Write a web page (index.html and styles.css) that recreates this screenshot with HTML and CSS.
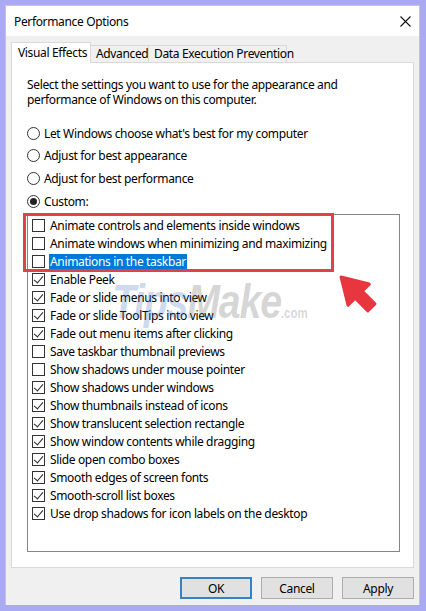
FILE: index.html
```html
<!DOCTYPE html>
<html lang="en">
<head>
    <meta charset="UTF-8">
    <meta name="viewport" content="width=device-width, initial-scale=1.0">
    <title>Performance Options</title>
    <link rel="stylesheet" href="styles.css">
</head>
<body>
    <div class="window">
        <div class="titlebar">
            <span class="title">Performance Options</span>
            <svg class="close" width="11" height="11" viewBox="0 0 11 11">
                <path d="M0.5 0.5 L10.5 10.5 M10.5 0.5 L0.5 10.5" stroke="#111" stroke-width="1.1" fill="none"/>
            </svg>
        </div>

        <div class="tabs">
            <div class="tab tab-visual active">Visual Effects</div>
            <div class="tab tab-advanced">Advanced</div>
            <div class="tab tab-dep">Data Execution Prevention</div>
        </div>

        <div class="panel">
            <p class="intro">Select the settings you want to use for the appearance and<br>performance of Windows on this computer.</p>

            <div class="radios">
                <div class="radio"><span class="dot"></span>Let Windows choose what's best for my computer</div>
                <div class="radio"><span class="dot"></span>Adjust for best appearance</div>
                <div class="radio"><span class="dot"></span>Adjust for best performance</div>
                <div class="radio checked"><span class="dot"></span>Custom:</div>
            </div>

            <div class="list">
                <div class="item"><span class="box"></span><span class="text">Animate controls and elements inside windows</span></div>
                <div class="item"><span class="box"></span><span class="text">Animate windows when minimizing and maximizing</span></div>
                <div class="item selected"><span class="box"></span><span class="text">Animations in the taskbar</span></div>
                <div class="item checked"><span class="box"></span><span class="text">Enable Peek</span></div>
                <div class="item checked"><span class="box"></span><span class="text">Fade or slide menus into view</span></div>
                <div class="item checked"><span class="box"></span><span class="text">Fade or slide ToolTips into view</span></div>
                <div class="item checked"><span class="box"></span><span class="text">Fade out menu items after clicking</span></div>
                <div class="item"><span class="box"></span><span class="text">Save taskbar thumbnail previews</span></div>
                <div class="item"><span class="box"></span><span class="text">Show shadows under mouse pointer</span></div>
                <div class="item checked"><span class="box"></span><span class="text">Show shadows under windows</span></div>
                <div class="item checked"><span class="box"></span><span class="text">Show thumbnails instead of icons</span></div>
                <div class="item checked"><span class="box"></span><span class="text">Show translucent selection rectangle</span></div>
                <div class="item checked"><span class="box"></span><span class="text">Show window contents while dragging</span></div>
                <div class="item checked"><span class="box"></span><span class="text">Slide open combo boxes</span></div>
                <div class="item checked"><span class="box"></span><span class="text">Smooth edges of screen fonts</span></div>
                <div class="item checked"><span class="box"></span><span class="text">Smooth-scroll list boxes</span></div>
                <div class="item checked"><span class="box"></span><span class="text">Use drop shadows for icon labels on the desktop</span></div>
            </div>
        </div>

        <div class="buttons">
            <button class="default">OK</button>
            <button>Cancel</button>
            <button>Apply</button>
        </div>

        <!-- annotation drawn over the list -->
        <div class="callout"></div>
        <svg class="pointer" width="50" height="50" viewBox="0 0 50 50">
            <g transform="translate(8 9) rotate(-45)">
                <polygon points="0,0 15,25 5,25 5,43 -5,43 -5,25 -15,25" fill="#e8363f" stroke="#e8363f" stroke-width="3" stroke-linejoin="round"/>
            </g>
        </svg>

        <div class="watermark"><span class="wm-tips">Tips</span><span class="wm-make">Make</span><span class="wm-com">.com</span></div>
    </div>
</body>
</html>
```

FILE: styles.css
```css
body {
    margin: 0;
    background-color: #aaaaf4;
    font-family: 'Noto Sans', 'Open Sans', sans-serif;
    font-size: 12px;
    letter-spacing: -0.35px;
    color: #000;
}
.window {
    position: relative;
    margin: 6px 0 0 6px;
    width: 413px;
    height: 599px;
    background-color: #f0f0f0;
    box-shadow: 0 0 0 1px #c4c4d8;
    display: flex;
    flex-direction: column;
    overflow: hidden;
}
.titlebar {
    height: 30px;
    background-color: #fff;
    display: flex;
    align-items: center;
    justify-content: space-between;
    padding: 0 8px 0 8px;
    flex-shrink: 0;
}
.title {
    font-size: 12px;
}
.close {
    display: block;
}

/* tab strip */
.tabs {
    height: 26px;
    display: flex;
    align-items: flex-end;
    padding-left: 5px;
    flex-shrink: 0;
}
.tab {
    box-sizing: border-box;
    height: 17px;
    border: 1px solid #d9d9d9;
    border-bottom: none;
    background-color: #f0f0f0;
    padding-left: 5px;
    line-height: 16px;
    white-space: nowrap;
    margin-left: -1px;
}
.tab.active {
    position: relative;
    z-index: 1;
    height: 21px;
    margin-bottom: -1px;
    margin-left: 0;
    padding-left: 6px;
    background-color: #fff;
    line-height: 19px;
}
.tab-visual { width: 80px; }
.tab-advanced { width: 59px; }
.tab-dep { width: 139px; }

.panel {
    box-sizing: border-box;
    margin: 0 5px;
    height: 506px;
    border: 1px solid #d9d9d9;
    background-color: #fff;
    padding: 14px 15px 0;
    flex-shrink: 0;
}
.intro {
    margin: 0;
    line-height: 15px;
}

/* radio buttons */
.radios {
    margin-top: 15px;
}
.radio {
    display: flex;
    align-items: center;
    height: 22.6px;
    gap: 4px;
}
.dot {
    box-sizing: border-box;
    width: 13px;
    height: 13px;
    border: 1px solid #333;
    border-radius: 50%;
    background-color: #fff;
    display: flex;
    justify-content: center;
    align-items: center;
}
.radio.checked .dot::after {
    content: '';
    width: 7px;
    height: 7px;
    border-radius: 50%;
    background-color: #222;
}

/* list of effects */
.list {
    box-sizing: border-box;
    margin-top: 2px;
    width: 373px;
    height: 338px;
    border: 1px solid #858585;
    padding: 1px 0 0 4px;
}
.item {
    display: flex;
    align-items: center;
    height: 18px;
    gap: 4px;
}
.box {
    position: relative;
    box-sizing: border-box;
    width: 13px;
    height: 13px;
    border: 1px solid #333;
    background-color: #fff;
    flex-shrink: 0;
}
.item.checked .box::after {
    content: '';
    position: absolute;
    left: 3px;
    top: 0px;
    width: 4px;
    height: 8px;
    border-right: 1.3px solid #222;
    border-bottom: 1.3px solid #222;
    transform: rotate(40deg);
}
.text {
    padding: 0 1px;
    line-height: 15px;
}
.item.selected .text {
    background-color: #0078d7;
    color: #fff;
}

/* dialog buttons */
.buttons {
    display: flex;
    justify-content: flex-end;
    gap: 9px;
    padding: 9px 5px 0 0;
}
button {
    box-sizing: border-box;
    width: 72px;
    height: 22px;
    border: 1px solid #adadad;
    background-color: #e1e1e1;
    font-family: inherit;
    font-size: 12px;
    letter-spacing: inherit;
    color: #000;
    padding: 0;
}
button.default {
    border: 2px solid #3583c6;
}

.callout {
    position: absolute;
    left: 17px;
    top: 207px;
    width: 311px;
    height: 59px;
    box-sizing: border-box;
    border: 3px solid #dd434b;
}
.pointer {
    position: absolute;
    left: 327px;
    top: 262px;
}

.watermark {
    position: absolute;
    left: 106px;
    top: 268px;
    font-family: 'Liberation Sans', Arial, sans-serif;
    font-weight: bold;
    font-style: italic;
    font-size: 48px;
    letter-spacing: -1.5px;
    transform: scaleX(0.82);
    transform-origin: left top;
    pointer-events: none;
    white-space: nowrap;
}
.wm-tips {
    color: rgba(60, 110, 190, 0.26);
}
.wm-make {
    color: rgba(110, 110, 110, 0.28);
}
.wm-com {
    font-size: 14px;
    font-style: normal;
    letter-spacing: 0;
    color: rgba(120, 120, 120, 0.3);
}
```
